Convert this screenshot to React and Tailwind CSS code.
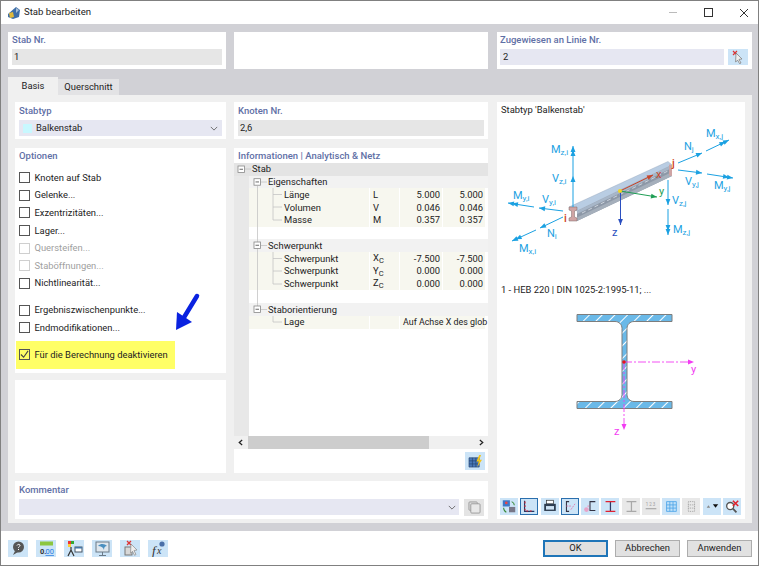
import { useState } from "react";

const LABEL = "text-[9.5px] font-medium leading-[12px] text-[#5f70a6]";

function Check({ label, checked, disabled, className = "" }) {
  return (
    <div className={`flex items-center h-[17.6px] ${className}`}>
      <span
        className={`w-[11px] h-[11px] border flex items-center justify-center shrink-0 ${
          disabled ? "border-[#cfcfcf]" : "border-[#555555]"
        }`}
      >
        {checked && (
          <svg viewBox="0 0 10 10" className="w-[9px] h-[9px]">
            <path d="M1 5l3 3 5-7" fill="none" stroke="#444" strokeWidth="1.2" />
          </svg>
        )}
      </span>
      <span className={`ml-[4.5px] whitespace-nowrap ${disabled ? "text-[#a0a0a0]" : "text-[#222222]"}`}>
        {label}
      </span>
    </div>
  );
}

function Chevron({ className = "" }) {
  return (
    <svg viewBox="0 0 10 6" className={`w-[8px] h-[5px] ${className}`}>
      <path d="M1 1l4 4 4-4" fill="none" stroke="#555" strokeWidth="1" />
    </svg>
  );
}

function Subscript({ a }) {
  return (
    <span>
      {a}
      <span className="text-[7.5px] align-[-1.5px]">C</span>
    </span>
  );
}

function Leaf({ name, sym, v1, v2, wide }) {
  return (
    <div className="flex h-[12.75px] items-center bg-[#f7f7ef] mr-[3px] leading-none">
      <div className="w-[120px] shrink-0 pl-[35px] whitespace-nowrap">{name}</div>
      <div className="w-[30px] shrink-0 pl-[3px] border-l border-white h-full flex items-center">{sym}</div>
      {wide ? (
        <div className="flex-1 border-l border-white h-full flex items-center pl-[3px] -mr-[3px] whitespace-nowrap text-[8.9px]">
          {wide}
        </div>
      ) : (
        <>
          <div className="w-[43px] border-l border-white h-full flex items-center justify-end pr-[2px]">{v1}</div>
          <div className="flex-1 border-l border-white h-full flex items-center justify-end pr-[2px]">{v2}</div>
        </>
      )}
    </div>
  );
}

function Group({ name }) {
  return (
    <div className="h-[12.75px] bg-[#f2f2f2] pl-[19px] flex items-center leading-none text-[#222222]">{name}</div>
  );
}

function TreeLines() {
  const box = (x, y) => (
    <g key={`${x}-${y}`}>
      <rect x={x} y={y} width="6.5" height="6.5" fill="#fff" stroke="#888" strokeWidth="0.8" />
      <path d={`M${x + 1.5} ${y + 3.25}h3.5`} stroke="#444" strokeWidth="0.8" />
    </g>
  );
  return (
    <svg viewBox="234 163 50 170" className="absolute left-0 top-0 w-[50px] h-[170px]">
      <g stroke="#c4c4c4" strokeWidth="0.8" fill="none">
        <path d="M245 169h6M261 182h6M257.5 186v120" />
        <path d="M273 188v32M273 194.5h9M273 207h9M273 220h9" />
        <path d="M261 245.500h6M273 252v32M273 258.500h9M273 271h9M273 284h9" />
        <path d="M261 309.500h6M273 316v6M273 322h9" />
      </g>
      {box(238, 166)}
      {box(254, 178.7)}
      {box(254, 242)}
      {box(254, 306)}
    </svg>
  );
}

function Tree() {
  return (
    <div className="relative flex-1 overflow-hidden text-[#222222]">
      <div className="absolute left-0 top-0 bottom-0 w-[15px] bg-[#e8e8e8]" />
      <div className="relative">
        <div className="h-[12.75px] bg-[#e4e4e4] pl-[18px] flex items-center leading-none">Stab</div>
        <div className="ml-[15px]">
          <Group name="Eigenschaften" />
          <Leaf name="Länge" sym="L" v1="5.000" v2="5.000" />
          <Leaf name="Volumen" sym="V" v1="0.046" v2="0.046" />
          <Leaf name="Masse" sym="M" v1="0.357" v2="0.357" />
          <div className="h-[12.75px]" />
          <Group name="Schwerpunkt" />
          <Leaf name="Schwerpunkt" sym={<Subscript a="X" />} v1="-7.500" v2="-7.500" />
          <Leaf name="Schwerpunkt" sym={<Subscript a="Y" />} v1="0.000" v2="0.000" />
          <Leaf name="Schwerpunkt" sym={<Subscript a="Z" />} v1="0.000" v2="0.000" />
          <div className="h-[12.75px]" />
          <Group name="Staborientierung" />
          <Leaf name="Lage" sym="" wide="Auf Achse X des glob" />
        </div>
      </div>
      <TreeLines />
    </div>
  );
}

function Arrow({ x1, y1, x2, y2, color = "#1ba1e2", w = 1, double }) {
  const a = Math.atan2(y2 - y1, x2 - x1);
  const head = (px, py) => {
    const l = 6;
    const s = 2.4;
    const bx = px - l * Math.cos(a);
    const by = py - l * Math.sin(a);
    const nx = -Math.sin(a) * s;
    const ny = Math.cos(a) * s;
    return `${px},${py} ${bx + nx},${by + ny} ${bx - nx},${by - ny}`;
  };
  return (
    <g>
      <line x1={x1} y1={y1} x2={x2} y2={y2} stroke={color} strokeWidth={w} />
      <polygon points={head(x2, y2)} fill={color} />
      {double && <polygon points={head(x2 - 4 * Math.cos(a), y2 - 4 * Math.sin(a))} fill={color} />}
    </g>
  );
}

function Force({ x, y, a, b }) {
  return (
    <text x={x} y={y} fill="#1ba1e2" fontSize="11">
      {a}
      <tspan fontSize="8" dy="2">
        {b}
      </tspan>
    </text>
  );
}

function BeamDiagram() {
  return (
    <svg viewBox="497 118 248 160" className="w-[248px] h-[160px] block" style={{ fontFamily: "Roboto, sans-serif" }}>
      <polygon points="569,207 668,161.500 672,165 577,211" fill="#b9cde3" stroke="#8fa2b8" strokeWidth="0.4" />
      <polygon points="577,211 672,165 672,176 577,221" fill="#8d98a7" />
      <polygon points="577,211 672,165 672,168 577,214" fill="#a7b6c8" />
      <polygon points="577,217.500 672,172 672,176 577,221" fill="#a5afbb" />
      <path d="M569 207h8v3l-2.500 1v6l2.500 1v3h-8v-3l2.500-1v-6l-2.500-1z" fill="#cfa4a4" stroke="#7e6a6a" strokeWidth="0.5" />
      <path d="M669 164.500l3 .5v11l-3-.5z" fill="#cfa4a4" />
      <line x1="582" y1="213" x2="668" y2="171" stroke="#e6edf4" strokeWidth="0.7" strokeDasharray="4 3" />

      <line x1="573" y1="207" x2="573" y2="146" stroke="#1ba1e2" />
      <polygon points="573,146 570.500,152 575.500,152" fill="#1ba1e2" />
      <polygon points="573,150 570.500,156 575.500,156" fill="#1ba1e2" />
      <polygon points="573,176 570.500,182 575.500,182" fill="#1ba1e2" />
      <Force x={551} y={153} a="M" b="z,i" />
      <Force x={552} y={182} a="V" b="z,i" />

      <Arrow x1={563} y1={211} x2={539} y2={208} />
      <Force x={542} y={203} a="V" b="y,i" />
      <Arrow x1={534} y1={207} x2={508} y2={203} double />
      <Force x={513} y={199} a="M" b="y,i" />
      <Arrow x1={563} y1={217} x2={540} y2={228} />
      <Force x={547} y={237} a="N" b="i" />
      <Arrow x1={536} y1={230} x2={512} y2={241} double />
      <Force x={519} y={252} a="M" b="x,i" />

      <Arrow x1={678} y1={163} x2={702} y2={153} />
      <Force x={684} y={150} a="N" b="j" />
      <Arrow x1={706} y1={151} x2={729} y2={140} double />
      <Force x={706} y={137} a="M" b="x,j" />
      <Arrow x1={678} y1={170} x2={702} y2={173} />
      <Force x={685} y={185} a="V" b="y,j" />
      <Arrow x1={707} y1={174} x2={733} y2={178} double />
      <Force x={714} y={189} a="M" b="y,j" />
      <Arrow x1={668} y1={180} x2={668} y2={205} />
      <Force x={672} y={204} a="V" b="z,j" />
      <Arrow x1={668} y1={209} x2={668} y2={235} double />
      <Force x={673} y={233} a="M" b="z,j" />

      <Arrow x1={620} y1={191} x2={653} y2={175} color="#c8452a" />
      <text x={656} y={178} fill="#c8452a" fontSize="11">x</text>
      <Arrow x1={620} y1={191} x2={657} y2={197} color="#1f9e55" />
      <text x={659} y={195} fill="#1f9e55" fontSize="11">y</text>
      <Arrow x1={620.5} y1={191} x2={620.5} y2={225} color="#2a4fc0" />
      <text x={612} y={236} fill="#2a4fc0" fontSize="11">z</text>
      <circle cx="620" cy="191" r="2" fill="#f4d71c" />
      <text x={564} y={222} fill="#d0451f" fontSize="11" fontWeight="500">i</text>
      <text x={672} y={167} fill="#d0451f" fontSize="11" fontWeight="500">j</text>
    </svg>
  );
}

function SectionDiagram() {
  const shape =
    "M577 314.500h95v7h-38c-4 0 -7 3 -7 7v66c0 4 3 7 7 7h38v7h-95v-7h38c4 0 7 -3 7 -7v-66c0 -4 -3 -7 -7 -7h-38z";
  return (
    <svg viewBox="497 296 248 142" className="w-[248px] h-[142px] block" style={{ fontFamily: "Roboto, sans-serif" }}>
      <defs>
        <pattern id="hatch" width="9" height="9" patternUnits="userSpaceOnUse" patternTransform="rotate(45)">
          <rect width="9" height="9" fill="#6ab9e8" />
          <rect width="1" height="9" fill="#ffffff" />
        </pattern>
      </defs>
      <path d={shape} fill="url(#hatch)" stroke="#7d7d7d" strokeWidth="1" />
      <path d="M624 362h66" stroke="#f23cf2" strokeWidth="0.9" strokeDasharray="8 2 2 2" />
      <polygon points="694,362 688,359.500 688,364.500" fill="#f23cf2" />
      <path d="M624 362v64" stroke="#f23cf2" strokeWidth="0.9" strokeDasharray="8 2 2 2" />
      <polygon points="624,430 621.500,424 626.500,424" fill="#f23cf2" />
      <circle cx="624" cy="362" r="1.800" fill="#e8141c" />
      <text x={691} y={373} fill="#f23cf2" fontSize="11">y</text>
      <text x={614} y={435} fill="#f23cf2" fontSize="11">z</text>
    </svg>
  );
}

const ICONS = {
  help: (
    <>
      <circle cx="9.500" cy="7" r="5.500" fill="#555" />
      <path d="M6 11l-2 4 5-3z" fill="#555" />
      <path d="M8 5.500c.5-1.500 3-1.500 3 0 0 1-1.500 1-1.500 2.200M9.500 9v1" fill="none" stroke="#fff" strokeWidth="1" />
    </>
  ),
  units: (
    <>
      <rect x="3" y="1.500" width="13" height="4" fill="#8cc63f" />
      <text x="3" y="14" fontSize="7.500" fontWeight="700" fill="#333">0.</text>
      <text x="8.500" y="14" fontSize="7.500" fill="#2a7de1" textDecoration="underline">00</text>
    </>
  ),
  parts: (
    <>
      <rect x="3" y="1" width="3" height="3" fill="#e33" />
      <rect x="6" y="1" width="3" height="3" fill="#3a3" />
      <rect x="3" y="4" width="3" height="3" fill="#fc3" />
      <path d="M6 7v3M3 16l3-6 3 6" fill="none" stroke="#333" strokeWidth="1.200" />
      <rect x="10" y="7" width="7" height="5" fill="#fff" stroke="#456" />
      <rect x="10" y="7" width="7" height="1.500" fill="#47a" />
    </>
  ),
  view: (
    <>
      <rect x="3" y="2" width="13" height="10" fill="#dfe7ee" stroke="#6a7a88" />
      <path d="M5 6c3-3 7-2 9 0-2 0-3 1-3 4-1-3-3-4-6-4z" fill="#4a8fc0" />
      <path d="M9.500 12v3M6 15.500h7" stroke="#6a7a88" />
    </>
  ),
  pick: (
    <>
      <path d="M6 1l4 4M10 1L6 5" stroke="#d33" strokeWidth="1.300" />
      <rect x="4" y="7" width="7" height="8" fill="#d8d8d8" stroke="#777" />
      <path d="M10 4l6 6-3 .5 2 4-1.500.8-2-4-2 2z" fill="#eee" stroke="#888" strokeWidth=".7" />
    </>
  ),
  fx: (
    <>
      <text x="3" y="15" fontSize="13" fontStyle="italic" fontFamily="'Liberation Serif', serif" fill="#333">f</text>
      <text x="8" y="14" fontSize="10" fontStyle="italic" fontFamily="'Liberation Serif', serif" fill="#333">x</text>
      <circle cx="13" cy="4" r="2.600" fill="#4a6fa8" />
    </>
  ),
  sync: (
    <>
      <rect x="2" y="1.500" width="8" height="7" fill="#3c78c8" />
      <circle cx="6" cy="4.500" r="1.500" fill="#e44" />
      <rect x="9" y="9" width="7" height="6" fill="#778" />
      <path d="M12 3c2 1 3 2 3 4M6 15c-2-1-3-2-3-5" fill="none" stroke="#3a8a3a" strokeWidth="1.200" />
    </>
  ),
  frame: (
    <>
      <path d="M4 2v12h11" fill="none" stroke="#223a66" strokeWidth="1.300" />
      <path d="M4.500 3v10.500H14" fill="none" stroke="#e02030" strokeWidth="1.200" strokeDasharray="2 2" />
    </>
  ),
  print: (
    <>
      <rect x="5" y="1.500" width="8" height="4" fill="#fff" stroke="#333" strokeWidth=".8" />
      <rect x="2.500" y="5.500" width="13" height="8" fill="#2e3d50" />
      <rect x="4.500" y="8" width="9" height="4" fill="#cfe3f4" />
    </>
  ),
  dims: (
    <>
      <path d="M8 3H5v11h3" fill="none" stroke="#334" strokeWidth="1.200" />
      <path d="M5 8h5M10 12l5-7" stroke="#e07ab0" strokeWidth="1" strokeDasharray="2 1" />
    </>
  ),
  dim2: (
    <>
      <path d="M15 3H9v10h6" fill="none" stroke="#334" strokeWidth="1.200" />
      <circle cx="5" cy="12" r="2.600" fill="#e7a3c8" />
      <circle cx="7" cy="8" r="1" fill="#e7a3c8" />
    </>
  ),
  ibeam: (
    <>
      <path d="M9.500 3v11" fill="none" stroke="#2b3b66" strokeWidth="1.400" />
      <path d="M4 3h11M4 14h11" fill="none" stroke="#e02030" strokeWidth="1.400" />
    </>
  ),
  ibeamGray: <path d="M4 3h11M4 14h11M9.500 3v11" fill="none" stroke="#a8a8a8" strokeWidth="1.400" />,
  numbers: (
    <>
      <text x="3" y="8" fontSize="5" fill="#a0a0a0">1 2 3</text>
      <path d="M3 11h12" stroke="#a0a0a0" strokeWidth="1.200" />
    </>
  ),
  grid: (
    <path d="M4 3h11v11H4zM4 6.700h11M4 10.300h11M7.700 3v11M11.300 3v11" fill="#bfe0f8" stroke="#4aa3e8" strokeWidth=".9" />
  ),
  dots: <path d="M6 3h7v11H6zM6 6.700h7M6 10.300h7" fill="none" stroke="#999" strokeWidth="1" strokeDasharray="1 1" />,
  drop: (
    <>
      <path d="M3 10l2-3 2 3z" fill="#888" />
      <path d="M10 6h6l-3 4z" fill="#111" />
    </>
  ),
  zoomx: (
    <>
      <circle cx="7" cy="8" r="4" fill="#fff" stroke="#555" strokeWidth="1.500" />
      <path d="M10 11l4 4" stroke="#555" strokeWidth="2" />
      <path d="M10 2l6 6M16 2l-6 6" stroke="#e0202a" strokeWidth="1.700" />
    </>
  ),
};

function IconBtn({ icon, active, gray }) {
  return (
    <div
      className={`w-[18px] h-[17.5px] shrink-0 flex items-center justify-center border ${
        active ? "border-[#2a6fae] bg-[#cce4f7]" : gray ? "border-transparent bg-[#e8e8e8]" : "border-transparent bg-[#cce4f7]"
      }`}
    >
      <svg viewBox="0 0 18 17" className="w-[18px] h-[17px]" style={{ fontFamily: "Roboto, sans-serif" }}>
        {ICONS[icon]}
      </svg>
    </div>
  );
}

function Button({ label, primary }) {
  return (
    <div
      className={`w-[65px] h-[17px] flex items-center justify-center bg-[#e1e1e1] text-[#222222] ${
        primary ? "border-2 border-[#1f75b8]" : "border border-[#adadad]"
      }`}
    >
      {label}
    </div>
  );
}

export default function App() {
  const [tab] = useState("Basis");
  return (
    <div className="w-[759px] h-[566px] bg-white border border-[#808080] flex flex-col overflow-hidden font-['Roboto',sans-serif] text-[9.4px] text-[#222222]">
      {/* title bar */}
      <div className="h-[23px] shrink-0 flex items-center pl-[6px] relative">
        <svg viewBox="0 0 14 14" className="w-[14px] h-[14px]">
          <path d="M1 8l8-7 4 3-1 7-6 2-5-2z" fill="#3e6ea8" />
          <path d="M2 7l4-1 1 5-4 1z" fill="#e0b93a" />
          <path d="M9 2l3 2-3 3z" fill="#a9bfd6" />
        </svg>
        <span className="ml-[3px] text-[9.6px]">Stab bearbeiten</span>
        <div className="ml-auto flex items-center mr-[9px]">
          <span className="w-[8px] h-px bg-[#bbbbbb]" />
          <span className="ml-[27px] w-[9px] h-[9px] border border-[#333333]" />
          <svg viewBox="0 0 10 10" className="ml-[26px] w-[10px] h-[10px]">
            <path d="M1 1l8 8M9 1l-8 8" stroke="#333" strokeWidth="1" />
          </svg>
        </div>
      </div>

      {/* main area */}
      <div className="h-[507px] shrink-0 bg-[#d1d1d6] pt-[8px] pl-[7px]">
        <div className="flex">
          <div className="w-[218px] h-[37px] bg-white px-[4px] pt-[2px]">
            <div className={LABEL}>Stab Nr.</div>
            <div className="mt-[3px] h-[16px] bg-[#e6e6e6] pl-[2px] flex items-center">1</div>
          </div>
          <div className="ml-[8px] w-[254px] h-[37px] bg-white" />
          <div className="ml-[9px] w-[255px] h-[37px] bg-white px-[3px] pt-[2px]">
            <div className={LABEL}>Zugewiesen an Linie Nr.</div>
            <div className="mt-[3px] flex">
              <div className="w-[224px] h-[16px] bg-[#e6e7f2] pl-[3px] flex items-center">2</div>
              <div className="ml-[4px] w-[20px] h-[16px] bg-[#cce4f7] flex items-center justify-center">
                <svg viewBox="0 0 16 14" className="w-[16px] h-[14px]">
                  <path d="M3 1l4 4M7 1L3 5" stroke="#d33" strokeWidth="1.200" />
                  <path d="M6 3l6 6-3 .4 2 3.600-1.400.7-2-3.600-2 2z" fill="#eee" stroke="#777" strokeWidth=".7" />
                </svg>
              </div>
            </div>
          </div>
        </div>

        <div className="mt-[8px] h-[18px] flex items-end">
          <div className="w-[50px] h-[18px] bg-[#f0f0f0] flex items-center justify-center">{tab}</div>
          <div className="w-[61px] h-[16px] bg-[#e3e3e5] flex items-center justify-center">Querschnitt</div>
        </div>

        <div className="w-[744px] h-[428px] bg-[#f0f0f0] pt-[7px] pl-[7px] flex">
          <div className="w-[473px] flex flex-col">
            <div className="flex">
              <div className="w-[211px] flex flex-col">
                <div className="h-[37px] bg-white px-[4px] pt-[2.5px]">
                  <div className={LABEL}>Stabtyp</div>
                  <div className="mt-[3.5px] h-[16px] bg-[#e6e7f2] flex items-center pl-[4px] pr-[4px]">
                    <span className="w-[9px] h-[9px] bg-[#c8f8ff]" />
                    <span className="ml-[4px]">Balkenstab</span>
                    <Chevron className="ml-auto" />
                  </div>
                </div>
                <div className="relative mt-[9px] h-[225px] bg-white pt-[2px]">
                  <div className={`${LABEL} pl-[4px]`}>Optionen</div>
                  <div className="mt-[7px] pl-[4px]">
                    <Check label="Knoten auf Stab" />
                    <Check label="Gelenke..." />
                    <Check label="Exzentrizitäten..." />
                    <Check label="Lager..." />
                    <Check label="Quersteifen..." disabled />
                    <Check label="Staböffnungen..." disabled />
                    <Check label="Nichtlinearität..." />
                    <Check label="Ergebniszwischenpunkte..." className="mt-[9.4px]" />
                    <Check label="Endmodifikationen..." />
                    <div className="mt-[4px] -ml-[3px] w-[159px] h-[28px] bg-[#ffff66] pl-[3px] flex items-center">
                      <Check label="Für die Berechnung deaktivieren" checked />
                    </div>
                  </div>
                  <svg viewBox="0 0 30 44" className="absolute left-[157px] top-[144px] w-[30px] h-[44px]">
                    <path d="M25 4L11 27" stroke="#0a22e0" strokeWidth="4.500" strokeLinecap="round" />
                    <polygon points="4,38 5,20 20,30" fill="#0a22e0" />
                  </svg>
                </div>
                <div className="mt-[7px] h-[93px] bg-white" />
              </div>

              <div className="ml-[8px] w-[254px] flex flex-col">
                <div className="h-[37px] bg-white px-[4px] pt-[2.5px]">
                  <div className={LABEL}>Knoten Nr.</div>
                  <div className="mt-[3.5px] h-[16px] bg-[#e6e6e6] pl-[2px] flex items-center">2,6</div>
                </div>
                <div className="mt-[9px] h-[325px] bg-white flex flex-col">
                  <div className={`${LABEL} h-[14.75px] pl-[4px] pt-[2px] shrink-0`}>Informationen | Analytisch &amp; Netz</div>
                  <Tree />
                  <div className="h-[13px] shrink-0 bg-[#f0f0f0] flex items-center relative">
                    <span className="absolute left-[14px] top-0 w-[181px] h-[13px] bg-[#cdcdcd]" />
                    <svg viewBox="0 0 6 8" className="absolute left-[4px] top-[3px] w-[5px] h-[7px]">
                      <path d="M5 1L1.500 4 5 7" fill="none" stroke="#222" strokeWidth="1.500" />
                    </svg>
                    <svg viewBox="0 0 6 8" className="absolute right-[4px] top-[3px] w-[5px] h-[7px]">
                      <path d="M1 1l3.500 3L1 7" fill="none" stroke="#222" strokeWidth="1.500" />
                    </svg>
                  </div>
                  <div className="h-[24px] shrink-0 flex items-start justify-end pt-[3px] pr-[3px]">
                    <div className="w-[20px] h-[18px] bg-[#cce4f7] flex items-center justify-center">
                      <svg viewBox="0 0 16 14" className="w-[15px] h-[13px]">
                        <path d="M1 3h11v10H1zM1 6.300h11M1 9.600h11M4.700 3v10M8.400 3v10" fill="#4a79b8" stroke="#24426e" strokeWidth=".7" />
                        <path d="M12 0l-3 7h2.500L10 13l5-8h-3l2-5z" fill="#f5c518" />
                      </svg>
                    </div>
                  </div>
                </div>
              </div>
            </div>

            <div className="mt-[8px] h-[38px] bg-white px-[4px] pt-[2.5px]">
              <div className={LABEL}>Kommentar</div>
              <div className="mt-[3.5px] flex">
                <div className="w-[441px] h-[16px] bg-[#e6e7f2] flex items-center justify-end pr-[3px]">
                  <Chevron />
                </div>
                <div className="ml-[5px] w-[20px] h-[17px] bg-[#e4e4e4] flex items-center justify-center">
                  <svg viewBox="0 0 14 14" className="w-[13px] h-[13px]">
                    <rect x="1" y="1" width="9" height="9" rx="1" fill="#ddd" stroke="#999" />
                    <rect x="3" y="3" width="10" height="10" rx="1" fill="#e8e8e8" stroke="#999" />
                  </svg>
                </div>
              </div>
            </div>
          </div>

          <div className="ml-[9px] w-[248px] h-[417px] bg-white flex flex-col">
            <div className="h-[16px] pl-[4px] pt-[2px] leading-[12px] shrink-0">Stabtyp 'Balkenstab'</div>
            <BeamDiagram />
            <div className="h-[18px] pl-[4px] flex items-end leading-[12px] shrink-0">1 - HEB 220 | DIN 1025-2:1995-11; ...</div>
            <SectionDiagram />
            <div className="mt-auto mb-[4px] flex pl-[3px] gap-[2.25px]">
              <IconBtn icon="sync" />
              <IconBtn icon="frame" active />
              <IconBtn icon="print" />
              <IconBtn icon="dims" active />
              <IconBtn icon="dim2" />
              <IconBtn icon="ibeam" />
              <IconBtn icon="ibeamGray" gray />
              <IconBtn icon="numbers" gray />
              <IconBtn icon="grid" />
              <IconBtn icon="dots" gray />
              <IconBtn icon="drop" />
              <IconBtn icon="zoomx" />
            </div>
          </div>
        </div>
      </div>

      {/* footer */}
      <div className="flex-1 flex items-start pt-[9px] pl-[7px]">
        <div className="flex gap-[8px]">
          {["help", "units", "parts", "view", "pick", "fx"].map((name) => (
            <div key={name} className="w-[20px] h-[17px] bg-[#cce4f7] flex items-center justify-center">
              <svg viewBox="0 0 18 17" className="w-[18px] h-[17px]" style={{ fontFamily: "Roboto, sans-serif" }}>
                {ICONS[name]}
              </svg>
            </div>
          ))}
        </div>
        <div className="ml-auto flex gap-[7px] mr-[6px]">
          <Button label="OK" primary />
          <Button label="Abbrechen" />
          <Button label="Anwenden" />
        </div>
      </div>
    </div>
  );
}
